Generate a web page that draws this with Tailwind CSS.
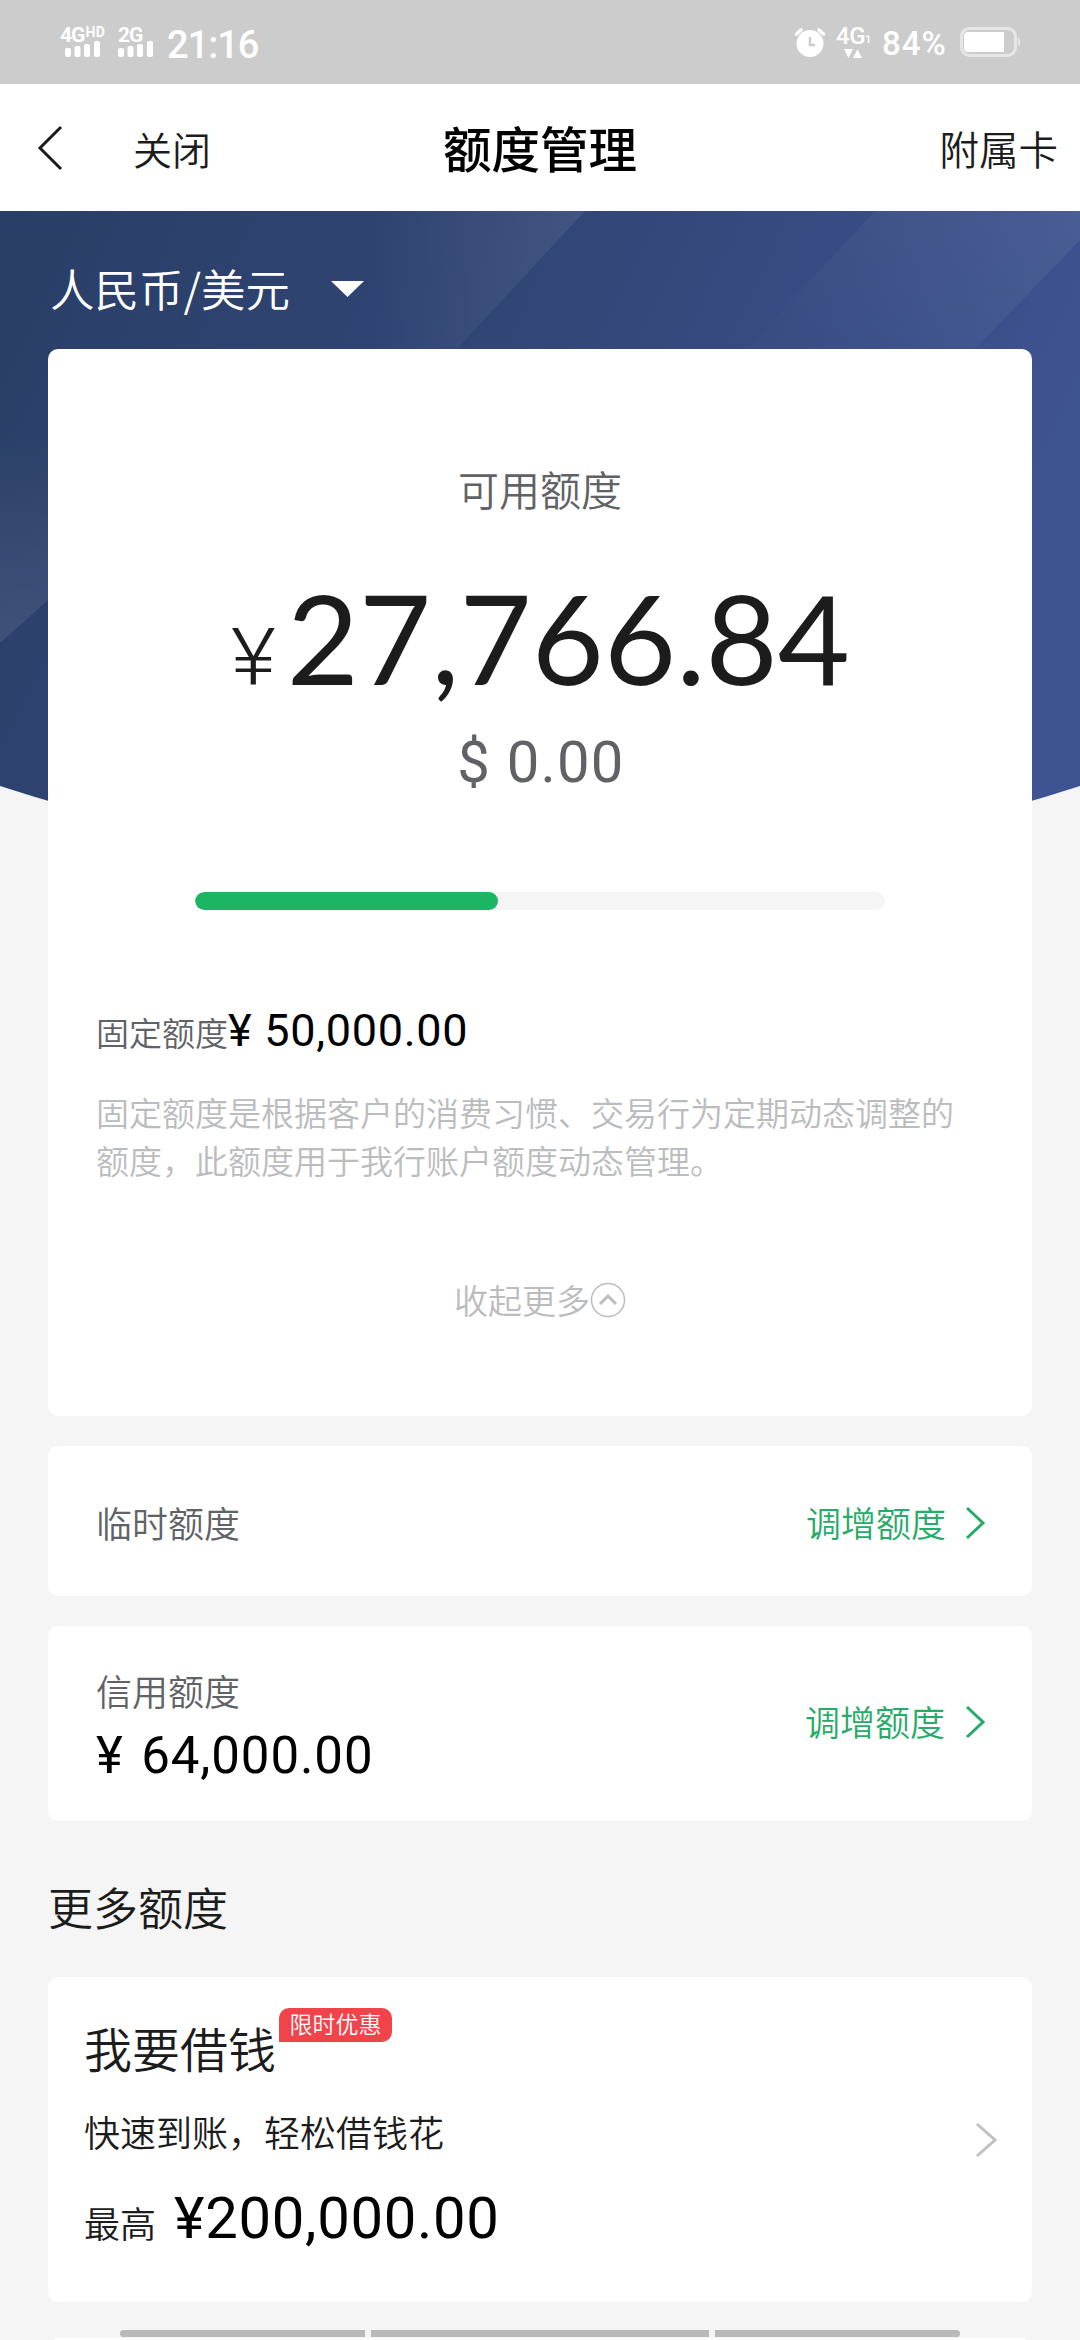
<!DOCTYPE html>
<html lang="zh-CN">
<head>
<meta charset="utf-8">
<title>额度管理</title>
<script src="https://cdn.jsdelivr.net/npm/@tailwindcss/browser@4"></script>
</head>
<body class="w-[1080px] h-[2340px] overflow-hidden bg-[#f5f5f5] font-['Noto_Sans_CJK_SC',sans-serif] font-[350] text-[#1c1c1c]">
<div class="flex h-[2340px] flex-col overflow-hidden">

  <!-- status bar -->
  <header class="flex h-[84px] shrink-0 items-start justify-between bg-[#cccccc] pl-[60px] pr-[59px] text-white">
    <div class="flex items-start">
      <div class="flex w-[58px] flex-col pt-[26px]">
        <div class="flex h-4 items-start whitespace-nowrap font-['Roboto',sans-serif] font-bold">
          <span class="text-[21px] leading-[19px] tracking-[-1px]">4G</span><span class="ml-px text-[14px] leading-[13px] tracking-[0.5px]">HD</span>
        </div>
        <svg class="ml-[5px] -mt-px" width="36" height="17" fill="#fff"><rect x="0" y="7" width="6" height="9" rx="2"/><rect x="9.500" y="5" width="6" height="11" rx="2"/><rect x="19" y="3" width="6" height="13" rx="2"/><rect x="29" y="0" width="6" height="16" rx="2"/></svg>
      </div>
      <div class="flex w-[49px] flex-col pt-[26px]">
        <div class="flex h-4 items-start font-['Roboto',sans-serif] font-bold">
          <span class="text-[21px] leading-[19px] tracking-[-1px]">2G</span>
        </div>
        <svg class="-mt-px" width="36" height="17" fill="#fff"><rect x="0" y="7" width="6" height="9" rx="2"/><rect x="9.500" y="5" width="6" height="11" rx="2"/><rect x="19" y="3" width="6" height="13" rx="2"/><rect x="29" y="0" width="6" height="16" rx="2"/></svg>
      </div>
      <span class="pt-[26px] font-['Roboto',sans-serif] text-[38px] leading-[38px] font-medium tracking-[-1px]">21:16</span>
    </div>
    <div class="flex items-start">
      <svg class="mt-[27px]" width="32" height="32" viewBox="0 0 32 32"><circle cx="16" cy="16.500" r="13.500" fill="#fff"/><path d="M2.500 7 7 3M29.500 7 25 3" stroke="#fff" stroke-width="3.500" stroke-linecap="round"/><path d="M16 10v8h5" fill="none" stroke="#ccc" stroke-width="2.500"/></svg>
      <div class="ml-[10px] flex w-[34px] flex-col pt-[25px]">
        <div class="flex h-[21px] items-end font-['Roboto',sans-serif] font-medium"><span class="text-[24px] leading-[20px] tracking-[-0.5px]">4G</span><span class="text-[11px] leading-[13px]">1</span></div>
        <svg class="ml-2 mt-[3px]" width="19" height="10" fill="#fff"><path d="M0 0h9L4.500 9zM9 9h9L13.500 0z"/></svg>
      </div>
      <span class="ml-[12px] w-[68px] whitespace-nowrap pt-[25px] font-['Roboto',sans-serif] text-[33px] leading-[37px] font-medium tracking-[1px]">84%</span>
      <svg class="ml-[10px] mt-[27px]" width="61" height="31" fill="none"><rect x="1.500" y="1.500" width="54" height="27" rx="8" stroke="#e6e6e6" stroke-width="3"/><path d="M8 5h36v20H8q-4 0-4-4V9q0-4 4-4z" fill="#fff"/><path d="M58 10q2 1 2 5t-2 5z" fill="#e6e6e6"/></svg>
    </div>
  </header>

  <!-- title bar -->
  <nav class="grid h-[127px] shrink-0 grid-cols-3 items-center bg-white px-[22px]">
    <div class="flex items-center pl-[14px]">
      <svg width="27" height="46" fill="none" stroke="#1c1c1c" stroke-width="3"><path d="M25 2 4 23 25 44"/></svg>
      <span class="ml-[70px] text-[39px] leading-[44px]">关闭</span>
    </div>
    <h1 class="-mt-[2px] text-center text-[48.500px] leading-[56px] font-medium text-black">额度管理</h1>
    <span class="text-right text-[39.500px] leading-[44px]">附属卡</span>
  </nav>

  <main class="relative flex flex-col px-[48px]">
    <!-- blue backdrop with diagonal light bands -->
    <svg class="absolute left-0 top-0" width="1080" height="680" viewBox="0 0 1080 680">
      <defs>
        <linearGradient id="base" x1="0" y1="0" x2="1" y2="0.300"><stop offset="0" stop-color="#293e66"/><stop offset=".5" stop-color="#324677"/><stop offset="1" stop-color="#3e5391"/></linearGradient>
        <linearGradient id="band" gradientUnits="userSpaceOnUse" x1="370" y1="0" x2="585" y2="0"><stop offset="0" stop-color="#fff" stop-opacity="0"/><stop offset="1" stop-color="#fff" stop-opacity=".08"/></linearGradient>
        <linearGradient id="band2" x1="0" y1="0.500" x2="1" y2="0"><stop offset="0" stop-color="#fff" stop-opacity=".01"/><stop offset="1" stop-color="#fff" stop-opacity=".07"/></linearGradient>
        <linearGradient id="side" x1="0" y1="0" x2="0" y2="1"><stop offset="0" stop-color="#fff" stop-opacity="0"/><stop offset="1" stop-color="#fff" stop-opacity=".09"/></linearGradient>
        <clipPath id="curve"><path d="M0 0H1080V575Q540 750 0 575Z"/></clipPath>
      </defs>
      <g clip-path="url(#curve)">
        <rect width="1080" height="680" fill="url(#base)"/>
        <path d="M370 0H585L455 140H370Z" fill="url(#band)"/>
        <path d="M875 0H1080V29L973 140H744Z" fill="url(#band2)"/>
        <path d="M0 220H48V389L0 432Z" fill="url(#side)"/>
      </g>
    </svg>

    <div class="relative flex h-[138px] items-center pb-[3px] pl-[2px] pt-[19px] text-white">
      <span class="text-[44.500px] leading-[56px]">人民币/美元</span>
      <svg class="ml-[41px] mt-[3px]" width="33" height="17"><path d="M0 0H33L16.500 16Z" fill="#fff"/></svg>
    </div>

    <!-- available limit -->
    <section class="relative flex h-[1067px] flex-col rounded-[10px] bg-white px-[48px]">
      <p class="mt-[111px] text-center text-[41px] leading-[56px] text-[#606266]">可用额度</p>
      <div class="mt-[61px] flex h-[120px] items-baseline justify-center pl-[3px] text-[#1c1c1c]">
        <span class="inline-block scale-x-110 font-['Roboto',sans-serif] text-[79px] leading-[112px] font-light">¥</span><span class="ml-[13px] font-['Lato',sans-serif] text-[124.500px] leading-[120px] font-normal">27,766.84</span>
      </div>
      <p class="mt-[33px] pl-[2px] text-center font-['Roboto',sans-serif] text-[58px] leading-[64px] font-normal tracking-[1.2px] text-[#606266]">$ 0.00</p>
      <div class="mx-auto mt-[98px] h-[18px] w-[690px] overflow-hidden rounded-[9px] bg-[#f5f5f5]">
        <div class="h-full w-[303px] rounded-[9px] bg-[#1bb563]"></div>
      </div>
      <div class="mt-[95px] flex h-[52px] items-baseline">
        <span class="text-[33px] leading-[52px] text-[#606266]">固定额度</span><span class="font-['Roboto',sans-serif] text-[45px] leading-[52px] font-normal tracking-[0.7px] text-black">¥ 50,000.00</span>
      </div>
      <p class="mt-[31px] text-[33px] leading-[48px] text-[#bbbcbe]">固定额度是根据客户的消费习惯、交易行为定期动态调整的<br>额度，此额度用于我行账户额度动态管理。</p>
      <div class="mt-[90px] flex items-center justify-center text-[#bbbcbe]">
        <span class="text-[34px] leading-[52px]">收起更多</span>
        <svg width="36" height="36" fill="none" stroke="currentColor"><circle cx="18" cy="18" r="16.500" stroke-width="1.500"/><path d="M10 22 18 14 26 22" stroke-width="3"/></svg>
      </div>
    </section>

    <section class="mt-[30px] flex h-[150px] items-center justify-between rounded-[10px] bg-white pl-[48px] pr-[46px] pt-[2px]">
      <span class="text-[36px] leading-[52px] text-[#606266]">临时额度</span>
      <span class="flex items-center text-[#27ab68]"><span class="text-[35px] leading-[52px]">调增额度</span><svg class="ml-[18px] mt-[2px]" width="22" height="34" fill="none" stroke="currentColor" stroke-width="3"><path d="M3 2 19 17 3 32"/></svg></span>
    </section>

    <section class="mt-[30px] flex h-[195px] items-center justify-between rounded-[10px] bg-white pl-[48px] pr-[46px]">
      <div class="flex flex-col">
        <span class="text-[36px] leading-[52px] text-[#606266]">信用额度</span>
        <span class="mt-[12px] font-['Roboto',sans-serif] text-[51px] leading-[56px] font-normal tracking-[0.9px] [word-spacing:4px] text-black">¥ 64,000.00</span>
      </div>
      <span class="-mt-[5px] flex items-center text-[#27ab68]"><span class="text-[35px] leading-[52px]">调增额度</span><svg class="ml-[19px] mt-[2px]" width="22" height="34" fill="none" stroke="currentColor" stroke-width="3"><path d="M3 2 19 17 3 32"/></svg></span>
    </section>

    <h2 class="mt-[56px] text-[45px] leading-[60px]">更多额度</h2>

    <section class="mt-[40px] flex h-[325px] items-center justify-between rounded-[10px] bg-white pl-[36px] pr-[34px]">
      <div class="flex flex-col self-start pt-[34px]">
        <div class="flex items-start">
          <span class="text-[48px] leading-[72px]">我要借钱</span>
          <span class="ml-[3px] -mt-[3px] h-[34px] w-[113px] rounded-[10px] rounded-bl-none bg-[#f0444a] text-center text-[23px] leading-[31px] text-white">限时优惠</span>
        </div>
        <span class="mt-[22px] text-[36px] leading-[52px]">快速到账，轻松借钱花</span>
        <div class="mt-[31px] flex items-baseline">
          <span class="text-[36px] leading-[60px]">最高</span><span class="ml-[18px] font-['Roboto',sans-serif] text-[58px] leading-[60px] font-normal tracking-[0.7px] text-black">¥200,000.00</span>
        </div>
      </div>
      <svg width="24" height="36" fill="none" stroke="#c0c0c0" stroke-width="3"><path d="M3 2 21 18 3 34"/></svg>
    </section>
  </main>

  <!-- gesture navigation handles -->
  <footer class="mt-[28px] flex h-[8px] shrink-0 gap-[6px] px-[120px]">
    <div class="h-[7px] w-[245px] rounded-l-full bg-[#b9b9b9]"></div>
    <div class="h-[7px] w-[338px] bg-[#b9b9b9]"></div>
    <div class="h-[7px] w-[245px] rounded-r-full bg-[#b9b9b9]"></div>
  </footer>
  <div class="mx-[54px] h-[2px] shrink-0 bg-white"></div>
</div>
</body>
</html>
